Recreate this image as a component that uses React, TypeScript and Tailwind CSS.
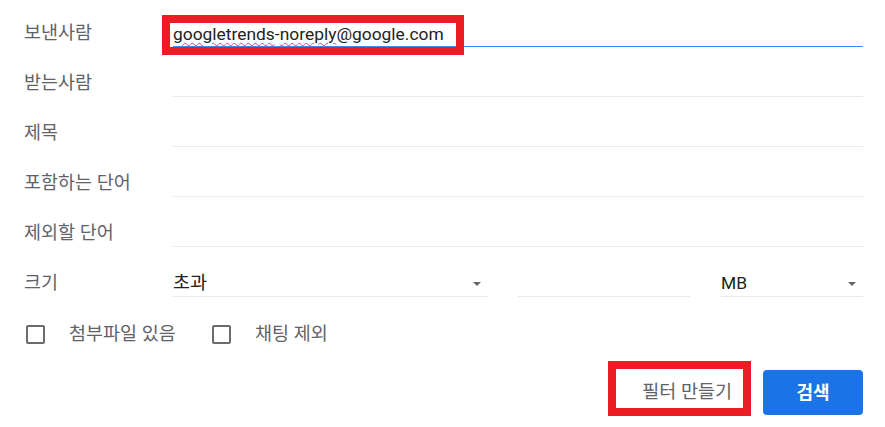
import React from "react";

const FONT = { fontFamily: 'Roboto, "Noto Sans CJK KR", sans-serif' };

function Arrow() {
  return (
    <svg width="8" height="4" viewBox="0 0 8 4" className="shrink-0">
      <polygon points="0,0 8,0 4,4" fill="#666" />
    </svg>
  );
}

function Row({
  label,
  children,
  first,
  focused,
}: {
  label: string;
  children?: React.ReactNode;
  first?: boolean;
  focused?: boolean;
}) {
  return (
    <div className={`flex items-end ${first ? "h-[47px]" : "h-[50px]"}`}>
      <div className="w-[173px] shrink-0 pl-[24px] h-[26px] flex items-center text-[#5f6368] text-[18.5px] whitespace-nowrap">
        {label}
      </div>
      <div
        className={`flex-1 mr-[22px] h-[26px] flex items-center border-b ${
          focused ? "border-[#4285f4]" : "border-[#e8eaed]"
        }`}
      >
        {children}
      </div>
    </div>
  );
}

function Checkbox({ label, width }: { label: string; width: string }) {
  return (
    <div className={`flex items-center ${width}`}>
      <div className="w-[19px] h-[19px] border-2 border-[#6b6b6b] rounded-[2px] shrink-0" />
      <span className="ml-[24px] text-[18.5px] text-[#5f6368] whitespace-nowrap">{label}</span>
    </div>
  );
}

export default function App() {
  return (
    <div className="relative w-[885px] h-[427px] overflow-hidden bg-white" style={FONT}>
      <Row label="보낸사람" first focused>
        <span className="text-[17.4px] text-[#222222] whitespace-nowrap leading-[22px]">
          <span className="underline decoration-wavy decoration-[#ef4444] decoration-1 underline-offset-[2px]">
            googletrends
          </span>
          -
          <span className="underline decoration-wavy decoration-[#ef4444] decoration-1 underline-offset-[2px]">
            noreply
          </span>
          @google.com
        </span>
      </Row>
      <Row label="받는사람" />
      <Row label="제목" />
      <Row label="포함하는 단어" />
      <Row label="제외할 단어" />
      <div className="flex items-end h-[50px]">
        <div className="w-[173px] shrink-0 pl-[24px] h-[26px] flex items-center text-[#5f6368] text-[18.5px]">
          크기
        </div>
        <div className="w-[315px] shrink-0 h-[26px] flex items-center justify-between border-b border-[#e8eaed] pr-[7px]">
          <span className="text-[18.5px] text-[#202124]">초과</span>
          <Arrow />
        </div>
        <div className="w-[172px] shrink-0 ml-[30px] h-[26px] border-b border-[#e8eaed]" />
        <div className="flex-1 ml-[31px] mr-[22px] h-[26px] flex items-center justify-between border-b border-[#e8eaed] pr-[7px]">
          <span className="text-[17.4px] text-[#202124]">MB</span>
          <Arrow />
        </div>
      </div>

      <div className="flex items-center mt-[28px] ml-[26px] h-[19px]">
        <Checkbox label="첨부파일 있음" width="w-[186px]" />
        <Checkbox label="채팅 제외" width="w-[200px]" />
      </div>

      <div className="flex justify-end items-center mt-[26px] mr-[22px] gap-[12px]">
        <button className="h-[45px] px-[19px] text-[18.5px] text-[#5f6368] bg-white whitespace-nowrap">
          필터 만들기
        </button>
        <button className="w-[100px] h-[45px] rounded-[4px] bg-[#1a73e8] text-white text-[18px] font-bold">
          검색
        </button>
      </div>

      <div className="absolute left-[162px] top-[15px] w-[302px] h-[40px] border-[8px] border-[#ed1c24] pointer-events-none" />
      <div className="absolute left-[608px] top-[361px] w-[143px] h-[55px] border-[8px] border-[#ed1c24] pointer-events-none" />
    </div>
  );
}
